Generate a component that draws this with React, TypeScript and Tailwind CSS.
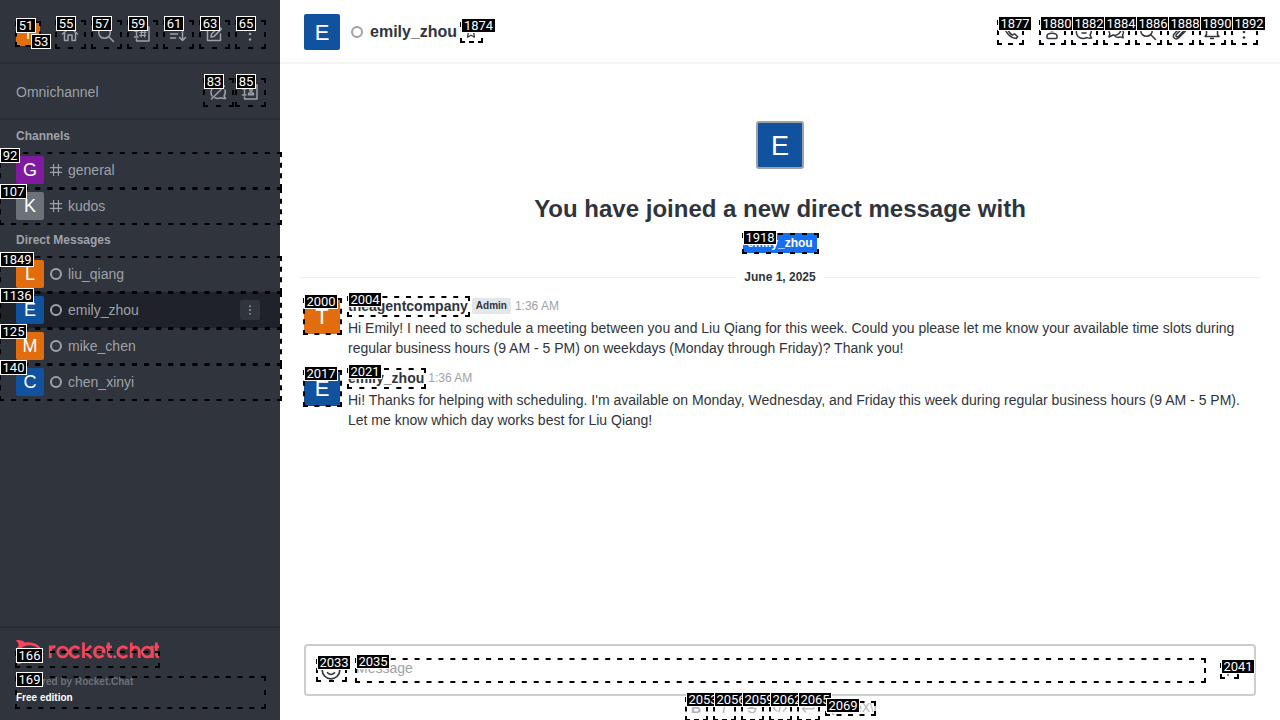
import React from "react";

type MarkProps = { n: number; x: number; y: number; w: number; h: number; lx: number; ly: number; lw: number };

function dash(length: number) {
  const count = Math.max(1, Math.round((length - 5) / 12));
  const gap = Math.max(0, (length - 5) / count - 5);
  return `5 ${gap}`;
}

function Mark({ n, x, y, w, h, lx, ly, lw }: MarkProps) {
  return (
    <>
      <svg className="pointer-events-none absolute z-10" style={{ left: x, top: y }} width={w} height={h} stroke="#000" strokeWidth="2">
        <path d={`M0 1H${w}M0 ${h - 1}H${w}`} strokeDasharray={dash(w)} />
        <path d={`M1 0V${h}M${w - 1} 0V${h}`} strokeDasharray={dash(h)} />
      </svg>
      <span
        className="pointer-events-none absolute z-20 flex h-[15px] items-center justify-center whitespace-nowrap border border-white bg-black font-['Roboto',sans-serif] text-[13px] leading-none text-white"
        style={{ left: lx, top: ly, width: lw }}
      >
        {n}
      </span>
    </>
  );
}

const marks: MarkProps[] = [
  { n: 51, x: 15, y: 21, w: 26, h: 26, lx: 16, ly: 18, lw: 20 },
  { n: 53, x: 38, y: 34, w: 2, h: 2, lx: 31, ly: 34, lw: 20 },
  { n: 55, x: 55, y: 20, w: 31, h: 29, lx: 56, ly: 16, lw: 20 },
  { n: 57, x: 91, y: 20, w: 31, h: 29, lx: 92, ly: 16, lw: 20 },
  { n: 59, x: 127, y: 20, w: 31, h: 29, lx: 128, ly: 16, lw: 20 },
  { n: 61, x: 163, y: 20, w: 31, h: 29, lx: 164, ly: 16, lw: 20 },
  { n: 63, x: 199, y: 20, w: 31, h: 29, lx: 200, ly: 16, lw: 20 },
  { n: 65, x: 235, y: 20, w: 31, h: 29, lx: 236, ly: 16, lw: 20 },
  { n: 83, x: 203, y: 78, w: 31, h: 29, lx: 204, ly: 74, lw: 20 },
  { n: 85, x: 235, y: 78, w: 31, h: 29, lx: 236, ly: 74, lw: 20 },
  { n: 92, x: -1, y: 152, w: 283, h: 37, lx: 0, ly: 148, lw: 20 },
  { n: 107, x: -1, y: 188, w: 283, h: 37, lx: 0, ly: 184, lw: 27 },
  { n: 1849, x: -1, y: 256, w: 283, h: 37, lx: 0, ly: 252, lw: 34 },
  { n: 1136, x: -1, y: 292, w: 283, h: 37, lx: 0, ly: 288, lw: 34 },
  { n: 125, x: -1, y: 328, w: 283, h: 37, lx: 0, ly: 324, lw: 27 },
  { n: 140, x: -1, y: 364, w: 283, h: 37, lx: 0, ly: 360, lw: 27 },
  { n: 166, x: 15, y: 651, w: 145, h: 17, lx: 16, ly: 648, lw: 27 },
  { n: 169, x: 15, y: 676, w: 251, h: 33, lx: 16, ly: 672, lw: 27 },
  { n: 1874, x: 460, y: 22, w: 23, h: 21, lx: 461, ly: 18, lw: 35 },
  { n: 1877, x: 997, y: 20, w: 27, h: 25, lx: 998, ly: 16, lw: 34 },
  { n: 1880, x: 1039, y: 20, w: 27, h: 25, lx: 1040, ly: 16, lw: 34 },
  { n: 1882, x: 1071, y: 20, w: 27, h: 25, lx: 1072, ly: 16, lw: 34 },
  { n: 1884, x: 1103, y: 20, w: 27, h: 25, lx: 1104, ly: 16, lw: 34 },
  { n: 1886, x: 1135, y: 20, w: 27, h: 25, lx: 1136, ly: 16, lw: 34 },
  { n: 1888, x: 1167, y: 20, w: 27, h: 25, lx: 1168, ly: 16, lw: 34 },
  { n: 1890, x: 1199, y: 20, w: 27, h: 25, lx: 1200, ly: 16, lw: 34 },
  { n: 1892, x: 1231, y: 20, w: 27, h: 25, lx: 1232, ly: 16, lw: 34 },
  { n: 1918, x: 742, y: 233, w: 77, h: 21, lx: 743, ly: 230, lw: 34 },
  { n: 2000, x: 303, y: 298, w: 39, h: 37, lx: 304, ly: 294, lw: 34 },
  { n: 2004, x: 347, y: 296, w: 123, h: 21, lx: 348, ly: 292, lw: 34 },
  { n: 2017, x: 303, y: 370, w: 39, h: 37, lx: 304, ly: 366, lw: 34 },
  { n: 2021, x: 347, y: 368, w: 79, h: 21, lx: 348, ly: 364, lw: 34 },
  { n: 2033, x: 316, y: 659, w: 31, h: 23, lx: 317, ly: 655, lw: 34 },
  { n: 2035, x: 355, y: 658, w: 851, h: 25, lx: 356, ly: 654, lw: 34 },
  { n: 2041, x: 1220, y: 663, w: 19, h: 16, lx: 1221, ly: 659, lw: 34 },
  { n: 2053, x: 685, y: 697, w: 23, h: 24, lx: 686, ly: 692, lw: 34 },
  { n: 2056, x: 713, y: 697, w: 23, h: 24, lx: 714, ly: 692, lw: 34 },
  { n: 2059, x: 741, y: 697, w: 23, h: 24, lx: 742, ly: 692, lw: 34 },
  { n: 2062, x: 769, y: 697, w: 23, h: 24, lx: 770, ly: 692, lw: 34 },
  { n: 2065, x: 797, y: 697, w: 23, h: 24, lx: 798, ly: 692, lw: 34 },
  { n: 2069, x: 825, y: 701, w: 51, h: 15, lx: 826, ly: 698, lw: 34 },
];

type IconName = keyof typeof icons;
const icons = {
  home: <><path d="M2.500 10 10 3.500l7.500 6.500" /><path d="M4.500 9v7.500H8V11h4v5.500h3.500V9" /></>,
  search: <><circle cx="8.500" cy="8.500" r="5.800" /><path d="m12.800 12.800 4.700 4.700" /></>,
  directory: <><path d="M4.500 5V3H17v14H4.500v-2M2.500 7h3.500M2.500 13h3.500M4.500 8.500v3" /><path strokeWidth="1.200" d="M9.700 6.500 9.200 13M13 6.500 12.500 13M8 8.300h6M7.700 11.300h6" /></>,
  sort: <path d="M2.500 6h9M2.500 10h7M2.500 14h5M14.500 5v11.500m-3-3 3 3 3-3" />,
  edit: <><path d="M10 3.500H3.500v13h13V10" /><path d="m7 13 .5-3L15 2.800l2.300 2.300-7.300 7.300z" /></>,
  kebab: <g fill="currentColor" stroke="none"><circle cx="10" cy="4.500" r="1.300" /><circle cx="10" cy="10" r="1.300" /><circle cx="10" cy="15.500" r="1.300" /></g>,
  chatOff: <path d="M4 14C1 9 5 3.500 10 3.500c2 0 3.500.7 4.600 1.700M17 8c.7 2.500.2 4.500-1 6l1.500 2.500c-2-.1-3.500-.1-4.500-.7-2 .8-4.300.7-6 0M3.500 17 16.500 4" />,
  contacts: <><path d="M4.500 5V3H17v14H4.500v-2M2.500 7h3.500M2.500 13h3.500M4.500 8.500v3" /><circle cx="11" cy="8" r="1.300" /><path d="M8.500 12.800v-.8c0-1.600 5-1.600 5 0v.8z" /></>,
  hash: <path d="M7 3v14M13 3v14M3 7h14M3 13h14" />,
  phone: <path d="M5 3 3.500 4.500c.5 6 6 11.500 11.700 12l1.500-1.700-3.200-3-2 1.300C9.800 12 8 10.200 7 8.300L8.200 6.500z" />,
  user: <><circle cx="10" cy="6" r="2.800" /><path d="M5 15.500V14c0-3.700 10-3.700 10 0v1.500c0 .7-.5 1-1 1H6c-.5 0-1-.3-1-1z" /></>,
  thread: <><path d="M4 14.500C-.5 8.500 5 3 10 3s9.500 5 6 10l1.500 3c-2 .3-3.500.2-4.500-.5-3 1.400-6.500 1.200-9-1z" /><path d="M7 8h6M8 11h4" /></>,
  discussion: <><path d="m3 15 .8-3.200C1.500 7 5 3 9 3c5 0 8 5 3.500 9-1.500 1.300-3.500 1.500-5.500 1z" /><path d="M15 7c3 2 3 4 1.500 6l.7 2.800-3-.9c-1.500.8-3.500.6-5-.4" /></>,
  clip: <path d="m16 8.500-6.700 6.700c-4 4-8-.4-4.500-4l6.500-7c3-3 6.500.3 3.500 3.500l-6 6.300c-2 2-4-.2-2-2l5.500-5.500" />,
  bell: <path d="M3 14.500h14l-1.500-2V9c0-7-11-7-11 0v3.500zM8.500 16.500h3" />,
  star: <path d="m10 3 2.100 4.500 5 .6-3.700 3.400 1 5L10 14l-4.400 2.500 1-5L2.900 8.100l5-.6z" />,
  emoji: <><circle cx="10" cy="10" r="8" /><path d="M6.800 12.500c2 2 4.400 2 6.400 0M7.300 7.500v.5M12.700 7.500v.5" /></>,
  code: <path d="m6 6-4 4 4 4m8-8 4 4-4 4m-2.500-9-3 10" />,
  enter: <path d="M17.500 4v7H3m4-4-4 4 4 4" />,
  plus: <path d="M10 3v14M3 10h14" />,
};

function Icon({ name, className = "size-5" }: { name: IconName; className?: string }) {
  return <svg viewBox="0 0 20 20" fill="none" stroke="currentColor" strokeWidth="1.500" strokeLinecap="round" strokeLinejoin="round" className={`shrink-0 ${className}`}>{icons[name]}</svg>;
}

function Avatar({ letter, className }: { letter: string; className: string }) {
  return <div className={`flex shrink-0 items-center justify-center leading-none text-white ${className}`}>{letter}</div>;
}

function Row({ letter, name, color, channel, active }: { letter: string; name: string; color: string; channel?: boolean; active?: boolean }) {
  return (
    <div className={`flex h-9 items-center pl-4 pr-5 text-[14px] ${active ? "bg-[#1f2329]" : ""}`}>
      <Avatar letter={letter} className={`size-7 rounded-[2px] text-[18px] ${color}`} />
      <div className="ml-1 flex size-4 items-center justify-center">
        {channel ? <Icon name="hash" className="size-4" /> : <span className="size-3 rounded-full border-2 border-[#9ea2a8]" />}
      </div>
      <span className="ml-1 flex-1">{name}</span>
      {active && <span className="flex size-5 items-center justify-center rounded-[2px] bg-[#2f343d]"><Icon name="kebab" className="size-[14px]" /></span>}
    </div>
  );
}

function Message({ letter, color, name, admin, lines }: { letter: string; color: string; name: string; admin?: boolean; lines: string[] }) {
  return (
    <div className="flex h-[72px] pl-6">
      <Avatar letter={letter} className={`mt-[5px] size-9 rounded-[2px] pt-[2px] text-[22px] ${color}`} />
      <div className="ml-2">
        <div className="mt-[3px] flex h-5 items-center text-[14px] leading-5">
          <span className="font-bold">{name}</span>
          {admin && <span className="ml-1 h-4 rounded-[2px] bg-[#e4e7ea] px-1 text-[10px] font-bold leading-4">Admin</span>}
          <span className="ml-1 text-[12px] text-[#9ea2a8]">1:36 AM</span>
        </div>
        <div className="mt-[2px] whitespace-nowrap text-[14px] leading-5">{lines.map((line) => <p key={line}>{line}</p>)}</div>
      </div>
    </div>
  );
}

export default function App() {
  return (
    <div className="relative flex h-[720px] w-[1280px] overflow-hidden bg-white font-['Liberation_Sans',Arial,sans-serif] text-[#2f343d]">
      <aside className="flex w-[280px] flex-col bg-[#2f343d] text-[#9ea2a8]">
        <div className="flex h-16 items-center gap-4 border-b-2 border-[#282c34] pl-4 pt-[5px]">
          <Avatar letter="T" className="size-6 rounded-[2px] bg-[#e26d0e] text-[15px]" />
          <div className="flex gap-4 pl-1">
            {(["home", "search", "directory", "sort", "edit", "kebab"] as IconName[]).map((name) => <Icon key={name} name={name} />)}
          </div>
        </div>
        <div className="flex h-14 items-center border-b-2 border-[#282c34] pl-4 pr-5 pt-[2px]">
          <span className="flex-1 text-[14px]">Omnichannel</span>
          <Icon name="chatOff" /><Icon name="contacts" className="ml-3 size-5" />
        </div>
        <h3 className="flex h-8 items-center pl-4 text-[12px] font-bold">Channels</h3>
        <Row letter="G" name="general" color="bg-[#7f1b9f]" channel />
        <Row letter="K" name="kudos" color="bg-[#6c727a]" channel />
        <h3 className="flex h-8 items-center pl-4 text-[12px] font-bold">Direct Messages</h3>
        <Row letter="L" name="liu_qiang" color="bg-[#e26d0e]" />
        <Row letter="E" name="emily_zhou" color="bg-[#10529e]" active />
        <Row letter="M" name="mike_chen" color="bg-[#e26d0e]" />
        <Row letter="C" name="chen_xinyi" color="bg-[#10529e]" />
        <footer className="mt-auto h-[94px] border-t-2 border-[#282c34] pl-4 pt-3">
          <svg width="143" height="26" viewBox="0 0 143 26" fill="none">
            <path d="M0 .3c4-.7 7 .4 9 2.200 8-1.500 17 3 17 9.500S17 22 9 21c-2 2.500-5 3.500-9 3 2-2 3-4 2.500-6-3-4-3-8 0-12C3 4 1.500 2 0 .3Z" fill="#f5455c" />
            <ellipse cx="13.500" cy="12" rx="10" ry="6.800" fill="#2f343d" />
            <g stroke="#f5455c" strokeWidth="2.800">
              <path d="M34.300 18V5.500m0 6c0-3.500 2-5 5.200-4.700" /><circle cx="46.700" cy="12" r="4.900" />
              <path d="M63.300 8.800c-3.500-4-9.300-1.300-9.300 3.200s5.800 7.200 9.300 3.200M67.500 2.500V18m7.700-12.300L69 12l6.500 6M78.800 11.800h9.400c-.3-6.500-9.700-6.500-9.700.2 0 5.200 6 6.700 9 3.200M92.500 2.500V14c0 2.300 1 3 3.700 2.800M90 6.800h6" />
              <path d="M111.300 8.800c-3.500-4-9.300-1.300-9.300 3.200s5.800 7.200 9.300 3.200M115.300 2.500V18m0-6.500c0-6 8-6 8 0V18M136.300 5.700V18M140.300 2.500V14c0 2.300.7 3 2.700 2.800M138.500 6.800h4.500" /><circle cx="131.300" cy="12" r="4.900" />
            </g><circle cx="98.700" cy="16.700" r="1.500" fill="#f5455c" />
          </svg>
          <p className="mt-[8px] text-[10px] font-bold leading-4 text-[#6c727a]">Powered by Rocket.Chat</p>
          <p className="text-[10px] font-bold leading-4 text-white">Free edition</p>
        </footer>
      </aside>
      <main className="flex flex-1 flex-col">
        <header className="flex h-16 shrink-0 items-center border-b-2 border-[#f2f3f5] pl-6 pr-[26px] pt-[2px]">
          <Avatar letter="E" className="size-9 rounded-[2px] bg-[#10529e] pt-px text-[22px]" />
          <span className="ml-[11px] size-3 rounded-full border-2 border-[#9ea2a8]" />
          <h1 className="ml-[7px] text-[16px] font-bold">emily_zhou</h1>
          <Icon name="star" className="ml-[6px] size-4" />
          <Icon name="phone" className="ml-auto size-5" />
          <span className="ml-[9px] h-5 w-px bg-[#eeeff1]" />
          <div className="ml-[11px] flex gap-3">
            {(["user", "thread", "discussion", "search", "clip", "bell", "kebab"] as IconName[]).map((name) => <Icon key={name} name={name} />)}
          </div>
        </header>
        <section className="flex h-[229px] shrink-0 flex-col items-center pt-[57px]">
          <Avatar letter="E" className="size-12 rounded-[3px] border-2 border-[#9ea2a8] bg-[#10529e] pt-[2px] text-[27px]" />
          <h2 className="mt-6 text-[24px] font-bold leading-8">You have joined a new direct message with</h2>
          <span className="mt-2 h-5 rounded-[2px] bg-[#156ff5] px-1 text-[12px] font-bold leading-5 text-white">emily_zhou</span>
          <div className="mt-[14px] flex h-5 w-full items-center gap-2 px-5 text-[12px] font-bold">
            <span className="h-px flex-1 bg-[#eeeff1]" />June 1, 2025<span className="h-px flex-1 bg-[#eeeff1]" />
          </div>
        </section>
        <Message letter="T" color="bg-[#e26d0e]" name="theagentcompany" admin lines={["Hi Emily! I need to schedule a meeting between you and Liu Qiang for this week. Could you please let me know your available time slots during", "regular business hours (9 AM - 5 PM) on weekdays (Monday through Friday)? Thank you!"]} />
        <Message letter="E" color="bg-[#10529e]" name="emily_zhou" lines={["Hi! Thanks for helping with scheduling. I'm available on Monday, Wednesday, and Friday this week during regular business hours (9 AM - 5 PM).", "Let me know which day works best for Liu Qiang!"]} />
        <div className="mx-6 mt-auto flex h-[52px] shrink-0 items-center rounded border-2 border-[#cbced1] pl-[14px] pr-[18px]">
          <Icon name="emoji" className="size-[22px]" />
          <span className="ml-[14px] flex-1 pb-1 text-[14px] leading-5 text-[#9ea2a8]">Message</span>
          <Icon name="plus" className="size-4" />
        </div>
        <div className="flex h-6 shrink-0 items-center pl-[402px] text-[14px] text-[#aeb2b8]">
          <span className="w-7 text-center font-bold">B</span><span className="w-7 text-center italic">I</span><span className="w-7 text-center line-through">S</span>
          <span className="flex w-7 justify-center"><Icon name="code" className="size-4" /></span><span className="flex w-7 justify-center"><Icon name="enter" className="size-4" /></span>
          <span className="ml-[6px] text-[12px]">\[KaTeX\]</span>
        </div>
      </main>
      {marks.map((mark) => <Mark key={mark.n} {...mark} />)}
    </div>
  );
}
